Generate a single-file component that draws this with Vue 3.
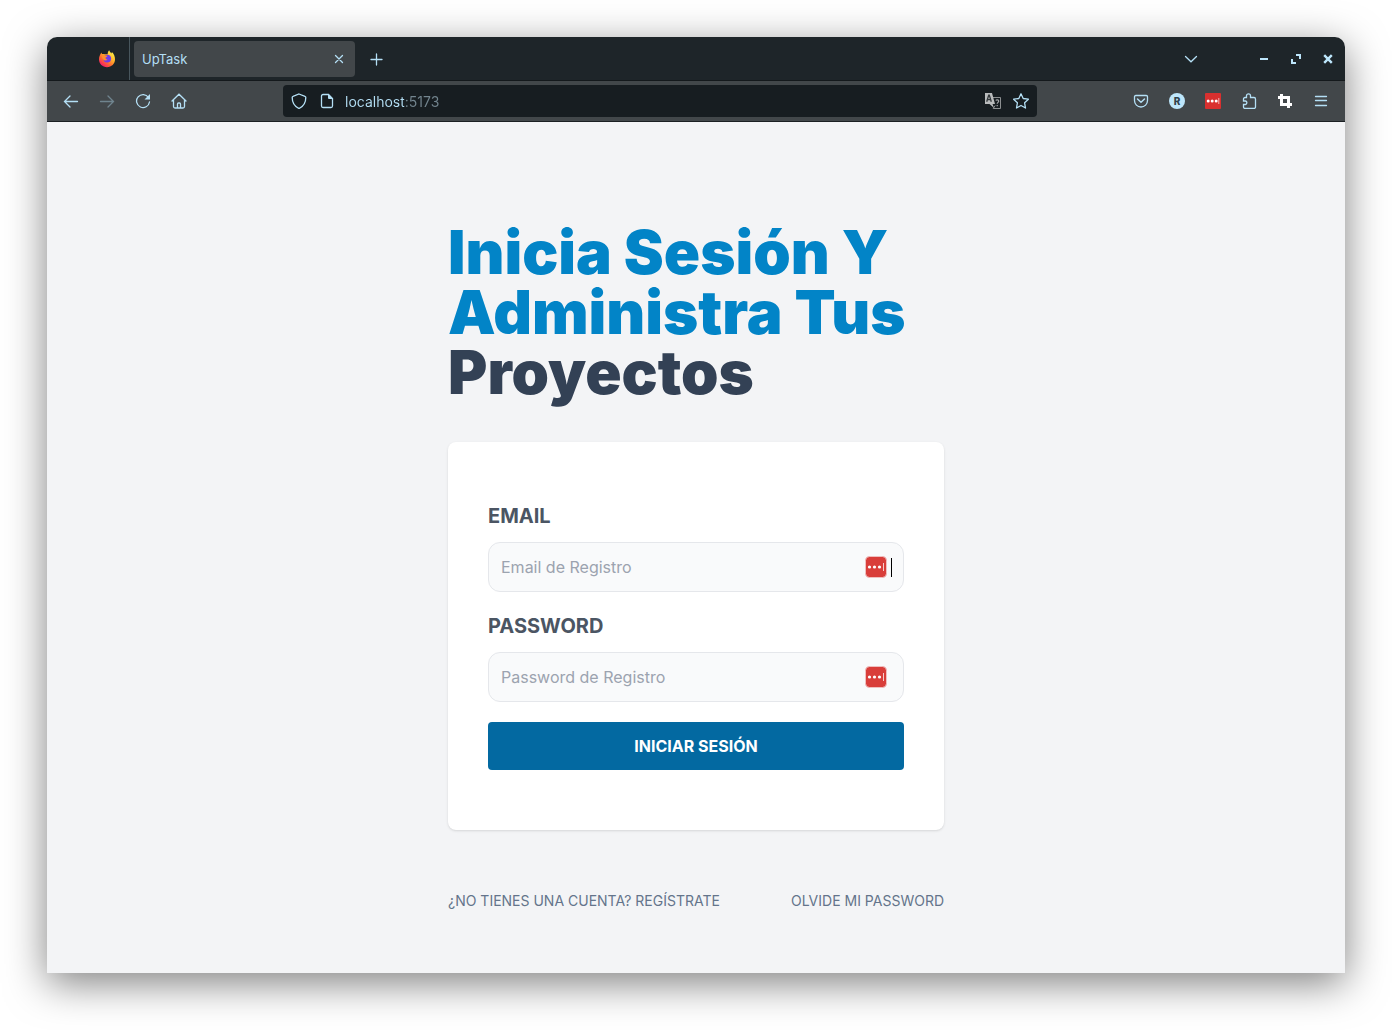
<script setup>
import { ref } from 'vue'

const address = ref('localhost:5173')
const email = ref('')
const password = ref('')
</script>

<template>
  <div class="desktop">
    <div class="window">
      <header class="tabbar">
        <button class="pinned" type="button" aria-label="Firefox">
          <svg width="18" height="18" viewBox="0 0 18 18">
            <defs>
              <linearGradient id="flame" x1="0.85" y1="0.1" x2="0.2" y2="0.95">
                <stop offset="0" stop-color="#fff04a" />
                <stop offset="0.35" stop-color="#ffb52b" />
                <stop offset="0.65" stop-color="#ff6a30" />
                <stop offset="1" stop-color="#f5156c" />
              </linearGradient>
            </defs>
            <path fill="url(#flame)" d="M1.800 5.400C2.100 4.300 2.700 3.200 3.500 2.400c0 .8.2 1.300.6 1.700 1-.3 1.800-.2 2.600.1h3c-.1-1.600.5-3 1.500-3.900.5 1.400 1.300 2.200 2.300 3.100l.4-1.300c2 1.900 3.100 4.500 3.100 7.200 0 4.500-3.500 7.900-8 7.900s-8-3.400-8-7.900c0-1.400.2-2.800.8-3.900z" />
            <circle cx="9.200" cy="8.600" r="3.900" fill="#6f3bea" />
            <path fill="#ff8f2c" d="M4 5c1.400-.6 2.700-.3 3.600.5l1.900.3c-.1.900-1.200 1.300-1.900 1.700-.3 1.200.6 2.100 2 1.900-1 1.500-3.300 1.500-4.400 0C4.300 8.200 3.800 7 4 5z" />
          </svg>
        </button>
        <div class="tab">
          <span class="tab-title">UpTask</span>
          <button class="tab-close" type="button" aria-label="Cerrar pestaña">
            <svg width="16" height="16" viewBox="0 0 16 16" class="line"><path d="M4.500 4.500l7 7M11.500 4.500l-7 7" /></svg>
          </button>
        </div>
        <button class="new-tab" type="button" aria-label="Nueva pestaña">
          <svg width="16" height="16" viewBox="0 0 16 16" class="line"><path d="M8.500 3v11M3 8.500h11" /></svg>
        </button>
        <button class="list-tabs" type="button" aria-label="Listar pestañas">
          <svg width="16" height="16" viewBox="0 0 16 16" class="line"><path d="M2.500 5.500L8 10.800l5.500-5.300" /></svg>
        </button>
        <div class="controls">
          <button type="button" aria-label="Minimizar">
            <svg width="16" height="16" viewBox="0 0 16 16"><path fill="#bde6fb" d="M4 7h8v2H4z" /></svg>
          </button>
          <button type="button" aria-label="Restaurar">
            <svg width="16" height="16" viewBox="0 0 16 16"><path fill="#bde6fb" d="M8 3h5v5h-2V5H8zM3 8h2v3h3v2H3z" /></svg>
          </button>
          <button type="button" aria-label="Cerrar">
            <svg width="16" height="16" viewBox="0 0 16 16"><path fill="none" stroke="#bde6fb" stroke-width="2.400" d="M4.200 4.200l7.600 7.600M11.800 4.200l-7.600 7.600" /></svg>
          </button>
        </div>
      </header>

      <nav class="toolbar" aria-label="Navegación">
        <div class="group">
          <button type="button" aria-label="Atrás">
            <svg width="16" height="16" viewBox="0 0 16 16" class="line"><path d="M14.500 8.500h-13M7 3L1.500 8.500 7 14" /></svg>
          </button>
          <button type="button" aria-label="Adelante" disabled>
            <svg width="16" height="16" viewBox="0 0 16 16" class="line"><path d="M1.500 8.500h13M9 3l5.500 5.500L9 14" /></svg>
          </button>
          <button type="button" aria-label="Recargar">
            <svg width="16" height="16" viewBox="0 0 16 16" class="line"><path d="M13.500 4.500A6.500 6.500 0 1 0 14.500 9" /><path fill="#b4dff5" stroke="none" d="M15 1v5.500H9.500z" /></svg>
          </button>
          <button type="button" aria-label="Inicio">
            <svg width="16" height="16" viewBox="0 0 16 16" class="line"><path d="M1 8l7-6.800L15 8M2.500 7v6.500a1.500 1.500 0 0 0 1.500 1.500h8a1.500 1.500 0 0 0 1.500-1.500V7M6.500 15v-4a1 1 0 0 1 1-1h1a1 1 0 0 1 1 1v4" /></svg>
          </button>
        </div>

        <div class="urlbar">
          <button type="button" aria-label="Protección">
            <svg width="16" height="16" viewBox="0 0 16 16" class="line"><path d="M8 1l6 2.300c.7.200.8.700.8 1.200 0 4.500-2 8.800-6.800 11C3.200 13.300 1.200 9 1.200 4.500c0-.5.1-1 .8-1.200z" /></svg>
          </button>
          <button type="button" aria-label="Información del sitio">
            <svg width="16" height="16" viewBox="0 0 16 16" class="line"><path d="M9.500 1.500H4A1.500 1.500 0 0 0 2.500 3v10A1.500 1.500 0 0 0 4 14.500h8a1.500 1.500 0 0 0 1.500-1.500V5.500z" /><path fill="#b4dff5" stroke="none" d="M9 1l5 5H10a1 1 0 0 1-1-1z" /></svg>
          </button>
          <input v-model="address" class="address" type="text" aria-label="Dirección" spellcheck="false" />
          <button type="button" aria-label="Traducir">
            <svg width="18" height="18" viewBox="0 0 18 18">
              <path fill="none" stroke="#8c8f91" stroke-width="1" d="M8.500 5.500h8v11H9.200l2-3" />
              <path fill="#b9bbbc" d="M1 1h7l3 11H8.500l1.500 4-4.500-4H1z" />
              <path fill="none" stroke="#33383b" stroke-width="1.300" d="M2.700 9.800L4.700 3.200h.6l2 6.600M3.500 7.700h3" />
              <path fill="none" stroke="#a2a4a6" stroke-width="1.200" d="M11.800 8.500c.6-1 2.900-.8 2.900.6 0 1.300-1.500 1.300-1.500 2.700M13.200 13v1.300" />
            </svg>
          </button>
          <button type="button" aria-label="Guardar en marcadores">
            <svg width="16" height="16" viewBox="0 0 16 16" class="line"><path stroke-linejoin="round" d="M8 .8l2.200 4.700 5.200.7-3.800 3.600.9 5.200L8 12.500 3.500 15l.9-5.200L.6 6.200l5.200-.7z" /></svg>
          </button>
        </div>

        <div class="group">
          <button type="button" aria-label="Pocket">
            <svg width="16" height="16" viewBox="0 0 16 16" class="line"><path d="M2.800 2.500h10.400c.8 0 1.300.5 1.300 1.300V7.500a6.500 6.500 0 0 1-13 0V3.800c0-.8.5-1.300 1.300-1.300z" /><path stroke-width="1.500" d="M4.500 6L8 9.300 11.500 6" /></svg>
          </button>
          <button type="button" aria-label="Cuenta"><span class="avatar">R</span></button>
          <button type="button" aria-label="LastPass">
            <svg width="16" height="16" viewBox="0 0 16 16"><rect width="16" height="16" rx="1" fill="#d9302f" /><g fill="#fff"><circle cx="3.200" cy="8" r="1.500" /><circle cx="7.200" cy="8" r="1.500" /><circle cx="11.200" cy="8" r="1.500" /><path opacity=".65" d="M13.300 5h1v6h-1z" /></g></svg>
          </button>
          <button type="button" aria-label="Extensiones">
            <svg width="16" height="16" viewBox="0 0 16 16" class="line"><path d="M5.500 4.500V2.800a2 2 0 0 1 4 0v1.700H13a1.500 1.500 0 0 1 1.500 1.500v8a1.500 1.500 0 0 1-1.500 1.500H4A1.500 1.500 0 0 1 2.500 14v-2.500h2a1.800 1.800 0 0 0 0-3.500h-2V6A1.500 1.500 0 0 1 4 4.500z" /></svg>
          </button>
          <button type="button" aria-label="Recortar">
            <svg width="16" height="16" viewBox="0 0 16 16"><path fill="#fff" d="M3 1h3v2h7v7h2v3h-2v2h-3v-2H3V6H1V3h2zM6 6v4h4V6z" fill-rule="evenodd" /></svg>
          </button>
          <button type="button" aria-label="Menú">
            <svg width="16" height="16" viewBox="0 0 16 16" class="line"><path d="M2.500 3.500h11M2.500 7.500h11M2.500 12.500h11" /></svg>
          </button>
        </div>
      </nav>

      <main class="page">
        <div class="content">
          <h1>Inicia Sesión Y Administra Tus <span>Proyectos</span></h1>

          <form class="card" @submit.prevent>
            <div class="field">
              <label for="email">Email</label>
              <div class="control">
                <input id="email" v-model="email" type="email" placeholder="Email de Registro" />
                <svg class="vault" width="22" height="22" viewBox="0 0 22 22"><rect x=".5" y=".5" width="21" height="21" rx="4" fill="#d93e3a" stroke="#f0c0c0" /><g fill="#fff"><circle cx="4.500" cy="11" r="1.600" /><circle cx="9.500" cy="11" r="1.600" /><circle cx="14.500" cy="11" r="1.600" /><path opacity=".75" d="M18 7h1v8h-1z" /></g></svg>
                <span class="caret"></span>
              </div>
            </div>
            <div class="field">
              <label for="password">Password</label>
              <div class="control">
                <input id="password" v-model="password" type="password" placeholder="Password de Registro" />
                <svg class="vault" width="22" height="22" viewBox="0 0 22 22"><rect x=".5" y=".5" width="21" height="21" rx="4" fill="#d93e3a" stroke="#f0c0c0" /><g fill="#fff"><circle cx="4.500" cy="11" r="1.600" /><circle cx="9.500" cy="11" r="1.600" /><circle cx="14.500" cy="11" r="1.600" /><path opacity=".75" d="M18 7h1v8h-1z" /></g></svg>
              </div>
            </div>
            <button class="submit" type="submit">Iniciar Sesión</button>
          </form>

          <nav class="links" aria-label="Cuenta">
            <a href="#registrar">¿No tienes una cuenta? Regístrate</a>
            <a href="#olvide-password">Olvide Mi Password</a>
          </nav>
        </div>
      </main>
    </div>
  </div>
</template>

<style>
body {
  background: #fff;
}
</style>

<style scoped>
.desktop,
.desktop * {
  box-sizing: border-box;
}

.desktop {
  display: flex;
  min-height: 100vh;
  padding: 37px 47px 57px;
  font-family: Inter, "Noto Sans", sans-serif;
}

.window {
  flex: 1;
  display: flex;
  flex-direction: column;
  overflow: hidden;
  border-radius: 10px 10px 0 0;
  box-shadow: 0 10px 40px rgba(0, 0, 0, 0.5);
}

button {
  display: flex;
  align-items: center;
  justify-content: center;
  padding: 0;
  border: 0;
  background: none;
  color: inherit;
  font-family: inherit;
}

svg {
  display: block;
  flex-shrink: 0;
}

.line {
  fill: none;
  stroke: #b4dff5;
  stroke-width: 1.3;
  stroke-linecap: round;
}

/* Tab strip */
.tabbar {
  display: flex;
  align-items: center;
  height: 44px;
  border-bottom: 1px solid #14191c;
  background: #1e2529;
  color: #b4dff5;
}

.pinned {
  height: 100%;
  width: 83px;
  padding: 0 13px 0 51px;
  border-right: 1px solid #48565d;
}

.tab {
  display: flex;
  align-items: center;
  justify-content: space-between;
  width: 221px;
  height: 36px;
  margin-left: 4px;
  padding: 0 8px;
  border-radius: 4px;
  background: #42474a;
}

.tab-title {
  font-size: 13px;
}

.new-tab {
  width: 28px;
  height: 28px;
  margin-left: 7px;
}

.list-tabs {
  width: 32px;
  height: 32px;
  margin-left: auto;
}

.controls {
  display: flex;
  margin: 0 1px 0 41px;
}

.controls button {
  width: 32px;
  height: 32px;
}

/* Navigation toolbar */
.toolbar {
  display: flex;
  align-items: center;
  justify-content: space-between;
  height: 41px;
  padding: 0 6px;
  border-bottom: 1px solid #1b2023;
  background: #42474a;
  color: #b4dff5;
}

.group {
  display: flex;
}

.group button {
  width: 36px;
  height: 32px;
}

.group button:disabled {
  opacity: 0.4;
}

.urlbar {
  display: flex;
  flex: 1;
  align-items: center;
  height: 32px;
  margin: 0 86px;
  padding: 0 2px;
  border-radius: 4px;
  background: #171d21;
}

.urlbar button {
  width: 28px;
  height: 28px;
}

.address {
  flex: 1;
  min-width: 0;
  margin: 0;
  padding: 2px 4px 0;
  border: 0;
  outline: 0;
  background: linear-gradient(90deg, #b4dff5 63px, #73858f 63px) text;
  -webkit-text-fill-color: transparent;
  font-family: inherit;
  font-size: 14px;
  line-height: 20px;
}

.avatar {
  width: 16px;
  height: 16px;
  border-radius: 50%;
  background: #bde6fb;
  color: #30424b;
  font-size: 10px;
  font-weight: 800;
  line-height: 16px;
  text-align: center;
}

/* Page */
.page {
  flex: 1;
  padding: 100px 20px 60px;
  background: #f3f4f6;
}

.content {
  max-width: 496px;
  margin: 0 auto;
}

h1 {
  margin: 0;
  color: #0284c7;
  font-size: 60px;
  font-weight: 900;
  line-height: 60px;
}

h1 span {
  color: #334155;
}

.card {
  display: flex;
  flex-direction: column;
  gap: 20px;
  margin-top: 40px;
  padding: 60px 40px;
  border-radius: 8px;
  background: #fff;
  box-shadow: 0 1px 3px rgba(0, 0, 0, 0.1), 0 1px 2px -1px rgba(0, 0, 0, 0.1);
}

.field {
  display: flex;
  flex-direction: column;
  gap: 12px;
}

label {
  color: #4b5563;
  font-size: 20px;
  font-weight: 700;
  line-height: 28px;
  text-transform: uppercase;
}

.control {
  position: relative;
}

.control input {
  display: block;
  width: 100%;
  margin: 0;
  padding: 12px;
  border: 1px solid #e5e7eb;
  border-radius: 12px;
  outline: 0;
  background: #f9fafb;
  color: #111827;
  font-family: inherit;
  font-size: 16px;
  line-height: 24px;
  height: 50px;
}

.control input::placeholder {
  color: #9ca3af;
  opacity: 1;
}

.vault {
  position: absolute;
  top: 14px;
  right: 17px;
}

.caret {
  position: absolute;
  top: 16px;
  right: 12px;
  width: 1px;
  height: 19px;
  background: #000;
}

.submit {
  width: 100%;
  padding: 12px;
  border-radius: 4px;
  background: #0369a1;
  color: #fff;
  font-size: 16px;
  font-weight: 700;
  line-height: 24px;
  text-transform: uppercase;
}

.links {
  display: flex;
  flex-wrap: wrap;
  justify-content: space-between;
  gap: 20px;
  margin-top: 60px;
}

.links a {
  color: #64748b;
  font-size: 14px;
  line-height: 22px;
  text-decoration: none;
  text-transform: uppercase;
}
</style>
